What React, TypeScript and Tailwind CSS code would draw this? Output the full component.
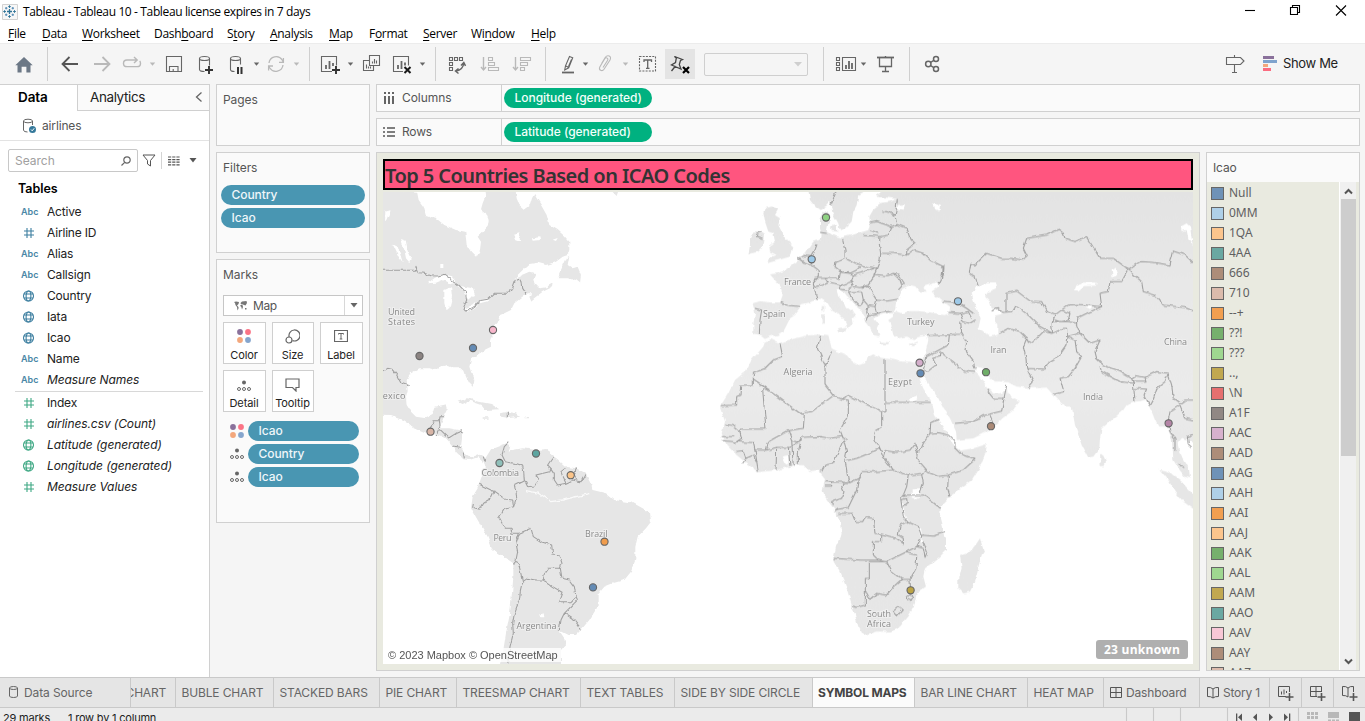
import React from "react";

const UI = "font-['Inter','Noto_Sans',sans-serif]";
const SEG = "font-['Open_Sans','Noto_Sans',sans-serif]";

/* ---------- small drawing helpers ---------- */

function Glyph({ box, className, children }: { box: string; className: string; children?: React.ReactNode }) {
  return (
    <svg viewBox={box} className={"shrink-0 " + className} fill="none" stroke="#666" strokeWidth="1.1">
      {children}
    </svg>
  );
}

function Caret({ x, y = 64, c = "#666" }: { x: number; y?: number; c?: string }) {
  return <path d={`M${x - 2.7},${y - 1.5} h5.4 l-2.7,3.2z`} fill={c} stroke="none" />;
}

function Cross({ x, y }: { x: number; y: number }) {
  return <path d={`M${x - 3},${y - 3} l6,6 m0,-6 l-6,6`} stroke="#1a1a1a" strokeWidth="2" />;
}

function Plus({ x, y }: { x: number; y: number }) {
  return <path d={`M${x - 4},${y} h8 M${x},${y - 4} v8`} stroke="#333" strokeWidth="1.9" />;
}

function FourDots({ className }: { className: string }) {
  return (
    <svg viewBox="0 0 14 14" className={"shrink-0 " + className}>
      <circle cx="3" cy="3" r="2.9" fill="#8a719b" />
      <circle cx="11" cy="3" r="2.9" fill="#fb7486" />
      <circle cx="3" cy="11" r="2.9" fill="#f3a77c" />
      <circle cx="11" cy="11" r="2.9" fill="#85a5cd" />
    </svg>
  );
}

function DetailDots({ className }: { className: string }) {
  return (
    <svg viewBox="0 0 14 12" className={"shrink-0 " + className} fill="none" stroke="#666">
      <circle cx="7" cy="2.4" r="2" fill="#666" stroke="none" />
      <circle cx="2" cy="9" r="1.5" />
      <circle cx="7" cy="9" r="1.5" />
      <circle cx="12" cy="9" r="1.5" />
    </svg>
  );
}

/* ---------- window chrome ---------- */

function TitleBar() {
  return (
    <div className="flex h-[22px] shrink-0 items-center bg-white pl-[2px] pt-px">
      <svg viewBox="0 0 16 16" className="h-4 w-4 shrink-0" fill="none" stroke="#2f7396">
        <path d="M.5,.5 H15.5 V15.5 H.5Z" fill="#f7f7f7" stroke="#d2d2d2" />
        <path d="M7.5,5 v5 M5,7.5 h5" strokeWidth="1.3" />
        <path d="M7.5,1.3 v2.6 M6.2,2.6 h2.6 M7.5,11.2 v2.6 M6.2,12.5 h2.6 M1.3,7.5 h2.6 M2.6,6.2 v2.6 M11.2,7.5 h2.6 M12.5,6.2 v2.6" />
        <path d="M4.2,3 v2.4 M3,4.2 h2.4 M10.8,3 v2.4 M9.6,4.2 h2.4 M4.2,9.6 v2.4 M3,10.8 h2.4 M10.8,9.6 v2.4 M9.6,10.8 h2.4" stroke="#5089b4" />
      </svg>
      <span className={"ml-[5px] whitespace-nowrap text-[12px] tracking-[-0.37px] text-black " + SEG}>
        Tableau - Tableau 10 - Tableau license expires in 7 days
      </span>
      <div className="flex-1" />
      <Glyph box="1240 0 110 22" className="mr-[15px] h-[22px] w-[110px]">
        <path d="M1245,9.5 h10" stroke="#000" />
        <path d="M1290.5,6.5 h7 v7 h-7z M1292.5,6.500 v-2 h7 v7 h-2" stroke="#000" />
        <path d="M1336,4.5 l10,10 m0,-10 l-10,10" stroke="#000" />
      </Glyph>
    </div>
  );
}

const MENU: [string, string, string, string][] = [
  ["", "F", "ile", "w-[34px]"],
  ["", "D", "ata", "w-[40px]"],
  ["", "W", "orksheet", "w-[72px]"],
  ["Dash", "b", "oard", "w-[73px]"],
  ["S", "t", "ory", "w-[43px]"],
  ["", "A", "nalysis", "w-[59px]"],
  ["", "M", "ap", "w-[40px]"],
  ["F", "o", "rmat", "w-[54px]"],
  ["", "S", "erver", "w-[48px]"],
  ["Wi", "n", "dow", "w-[60px]"],
  ["", "H", "elp", "w-[40px]"],
];

function MenuBar() {
  return (
    <div className={"flex h-[21px] shrink-0 items-center bg-white pl-2 text-[12px] tracking-[-0.3px] text-black " + SEG}>
      {MENU.map(([a, u, b, w]) => (
        <span key={a + u + b} className={"shrink-0 whitespace-nowrap pt-[2px] " + w}>
          {a}
          <span className="underline underline-offset-2">{u}</span>
          {b}
        </span>
      ))}
    </div>
  );
}

function ToolSep() {
  return <div className="h-[34px] w-px shrink-0 bg-[#cfcfcf]" />;
}

function Toolbar() {
  const d = "#b9b9b9";
  return (
    <div className="flex h-[41px] shrink-0 items-center border-t border-[#ececec] bg-[#f5f5f5]">
      <Glyph box="0 44 47 40" className="h-10 w-[47px]">
        <path d="M15.3,65.3 L24,57 L32.7,65.3 H30.5 V72.5 H26.4 V66.7 H21.6 V72.5 H17.5 V65.3Z" fill="#6c7886" stroke="none" />
      </Glyph>
      <ToolSep />
      <Glyph box="48 44 261 40" className="h-10 w-[261px]">
        <path d="M62.5,64 H78 M69.5,57 L62.5,64 L69.5,71" stroke="#555" strokeWidth="1.8" />
        <path d="M94,64 H109 M102.5,57 L109.5,64 L102.5,71" stroke={d} strokeWidth="1.8" />
        <path d="M137,60 H127 q-3.5,0 -3.5,3.4 q0,3.2 3.5,3.2 H137 q3.5,0 3.5,-3.2 q0,-1.6 -.8,-2.4 M134,57 l3.2,3 l-3.2,3" stroke={d} strokeWidth="1.4" />
        <Caret x={152.5} c={d} />
        <path d="M166.5,56.5 h15 v15 h-15z M169.5,71.5 V66.5 H178 V71.5 M173.2,69 v2.5" />
        <path d="M199.5,58.5 v11 q0,2 5,2 M209.5,58.5 v7" />
        <ellipse cx="204.5" cy="58.5" rx="5" ry="2" />
        <Plus x={209} y={70} />
        <path d="M230.5,58.5 v11 q0,2 4,2 M240.5,58.5 v6" />
        <ellipse cx="235.5" cy="58.5" rx="5" ry="2" />
        <path d="M238,67 v7 M241.5,67 v7" stroke="#333" strokeWidth="2" />
        <Caret x={256.5} />
        <path d="M269,63 a7.2,7.2 0 0 1 13.2,-3 l1,2 m.2,-4 v4.4 h-4.4 M283,65 a7.2,7.2 0 0 1 -13.2,3 l-1,-2 m-.2,4.5 v-4.5 h4.4" stroke={d} strokeWidth="1.3" />
        <Caret x={296.5} c={d} />
      </Glyph>
      <ToolSep />
      <Glyph box="310 44 125 40" className="h-10 w-[125px]">
        <path d="M332,71.5 h-10.5 v-15 h15 v9" />
        <path d="M326,69 v-4 M329.5,69 v-8 M333,66 v-3" strokeWidth="1.8" />
        <Plus x={336} y={70} />
        <Caret x={350.5} />
        <path d="M369.5,55.5 h10 v10 h-10z M369.5,60.5 h-6 v10 h10 v-5" />
        <path d="M372.5,63.5 v-2 M374.5,63.5 v-4.5 M376.5,63.5 v-3 M366.5,68.5 v-4 M368.5,68.5 v-2 M370.5,68.5 v-2" />
        <path d="M403,71.5 h-9.5 v-15 h15 v9" />
        <path d="M398,69 v-4 M401.5,69 v-8 M405,65.5 v-3" strokeWidth="1.8" />
        <Cross x={407.5} y={70} />
        <Caret x={422.5} />
      </Glyph>
      <ToolSep />
      <Glyph box="436 44 109 40" className="h-10 w-[109px]">
        <path d="M449.5,57.5 h3 v3 h-3z M454.5,57.5 h3 v3 h-3z M459.5,57.5 h3 v3 h-3z M449.5,62.5 h3 v3 h-3z M449.5,67.5 h3 v3 h-3z" />
        <path d="M456,71 q7,-1 7.8,-8 M461,65.5 l2.8,-3 l1.7,3.3 M458.5,68.5 l-3,2.6 l3,2.4" strokeWidth="1.5" />
        <g stroke={d}>
          <path d="M483.5,57 v13 M481,67 l2.5,3 l2.5,-3" strokeWidth="1.4" />
          <path d="M488.5,57.5 h4 v3 h-4z M488.5,62.5 h6 v3 h-6z M488.5,67.5 h10 v3 h-10z" />
          <path d="M515.5,57 v13 M513,67 l2.5,3 l2.5,-3" strokeWidth="1.4" />
          <path d="M520.5,57.5 h10 v3 h-10z M520.5,62.5 h7 v3 h-7z M520.5,67.5 h4 v3 h-4z" />
        </g>
      </Glyph>
      <ToolSep />
      <Glyph box="546 44 119 40" className="h-10 w-[119px]">
        <path d="M569.5,56.5 l3.2,1.3 l-4,10 l-4,2.2 l.8,-4.2z M565.5,65.8 l3.2,1.6 M568.5,66.5 l3,-7" />
        <path d="M562,72.5 h12" strokeWidth="1.8" />
        <Caret x={585.5} />
        <path d="M603,67.5 l4.5,-7 q1,-2 -.6,-2.6 q-1.4,-.6 -2.3,1 l-4.8,8 q-1,2.5 .8,3.4 q2,1 3.4,-1 l6,-9.3 q1.4,-3 -.8,-4 q-2.4,-.8 -4,1.5 l-3.6,6" stroke={d} />
        <Caret x={625.5} c={d} />
        <path d="M639.5,56.5 h16 v14.5 h-16z" strokeDasharray="2 1.2" />
        <path d="M644,62 v-2 h7.5 v2 M647.7,60 v8 M646,68.3 h3.5" strokeWidth="1.3" />
      </Glyph>
      <Glyph box="665 49 30 30" className="h-[30px] w-[30px] bg-[#e4e4e4]">
        <path d="M674.5,56.5 l8,3 l-2,1 l-1.2,4 l1.7,4.5 l-9.5,-4 l4,-2.5 l.8,-4.5z M675.5,66 l-4,5" stroke="#444" strokeWidth="1.3" />
        <path d="M683,67 l6,6 m0,-6 l-6,6" stroke="#000" strokeWidth="2.2" />
      </Glyph>
      <div className="ml-[9px] mr-[15px] flex h-[23px] w-[104px] shrink-0 items-center justify-end rounded-[2px] border border-[#cfcfcf] pr-[5px]">
        <svg viewBox="0 0 8 5" className="h-[5px] w-2"><path d="M0,0 H8 L4,4.5Z" fill="#cfcfcf" /></svg>
      </div>
      <ToolSep />
      <Glyph box="824 44 85 40" className="h-10 w-[85px]">
        <path d="M836.5,57.5 h3 v3 h-3z M836.5,62.5 h3 v3 h-3z M836.5,67.5 h3 v3 h-3z M842.5,57.5 h13 v13 h-13z" />
        <path d="M846,69 v-4 M849,69 v-8 M852,69 v-6" strokeWidth="1.8" />
        <Caret x={863.5} />
        <path d="M877,57.5 h17" strokeWidth="1.8" />
        <path d="M879.5,58 v8.5 h12 v-8.5 M885.5,56 v2 M885.5,66.5 v4.5 M882,71.5 h7" strokeWidth="1.3" />
      </Glyph>
      <ToolSep />
      <Glyph box="910 44 45 40" className="h-10 w-[45px]">
        <circle cx="928.3" cy="64" r="2.7" strokeWidth="1.5" />
        <circle cx="936" cy="59" r="2.5" strokeWidth="1.5" />
        <circle cx="936" cy="69" r="2.5" strokeWidth="1.5" />
        <path d="M930.5,62.5 l3.3,-2.2 M930.5,65.5 l3.3,2.2" strokeWidth="1.5" />
      </Glyph>
      <div className="flex-1" />
      <Glyph box="1220 44 60 40" className="h-10 w-[60px]">
        <path d="M1226.5,57.5 h14 l3.5,3.5 l-3.5,3.5 h-14z M1234.5,55 v2 M1234.5,65 v7 M1232,72.5 h5" />
        <path d="M1263,57.5 h11" stroke="#8a719b" strokeWidth="3" />
        <path d="M1263,61.5 h14" stroke="#7fa3cd" strokeWidth="3" />
        <path d="M1263,65.5 h5" stroke="#f3a77c" strokeWidth="3" />
        <path d="M1263,69.5 h8" stroke="#fb6c80" strokeWidth="3" />
      </Glyph>
      <span className={"ml-[3px] w-[82px] shrink-0 whitespace-nowrap text-[13px] tracking-[-0.35px] text-[#222] " + UI}>Show Me</span>
    </div>
  );
}

/* ---------- data pane ---------- */

type Kind = "abc" | "num" | "geo";

function FieldIcon({ kind, color }: { kind: Kind; color: string }) {
  if (kind === "abc")
    return <span className="w-[26px] shrink-0 pt-px text-[9px] font-semibold text-[#4a87a6]">Abc</span>;
  return (
    <svg viewBox="0 0 26 12" className="h-3 w-[26px] shrink-0" fill="none" stroke={color} strokeWidth="1.1">
      {kind === "num" ? (
        <path d="M6,1 v10 M10,1 v10 M3,4 h10 M3,8 h10" />
      ) : (
        <>
          <circle cx="7.5" cy="6" r="5" />
          <ellipse cx="7.5" cy="6" rx="2.4" ry="5" />
          <path d="M3,4 h9 M3,8 h9" />
        </>
      )}
    </svg>
  );
}

const DIMS: [string, Kind, boolean][] = [
  ["Active", "abc", false],
  ["Airline ID", "num", false],
  ["Alias", "abc", false],
  ["Callsign", "abc", false],
  ["Country", "geo", false],
  ["Iata", "geo", false],
  ["Icao", "geo", false],
  ["Name", "abc", false],
  ["Measure Names", "abc", true],
];
const MEASURES: [string, Kind, boolean][] = [
  ["Index", "num", false],
  ["airlines.csv (Count)", "num", true],
  ["Latitude (generated)", "geo", true],
  ["Longitude (generated)", "geo", true],
  ["Measure Values", "num", true],
];

function FieldRow({ f, color }: { f: [string, Kind, boolean]; color: string }) {
  return (
    <div className="flex h-[21px] items-center pl-[21px]">
      <FieldIcon kind={f[1]} color={color} />
      <span className={"whitespace-nowrap pt-px text-[12px] text-[#222] " + (f[2] ? "italic tracking-[-0.08px]" : "tracking-[-0.18px]")}>{f[0]}</span>
    </div>
  );
}

function DataPane() {
  return (
    <div className={"flex w-[210px] shrink-0 flex-col border-r border-t border-[#d0d0d0] bg-white " + UI}>
      <div className="flex h-[26px] shrink-0">
        <div className="w-[77px] pl-[18px] pt-[2px] text-[13.5px] font-semibold tracking-[-0.1px] text-black">Data</div>
        <div className="flex flex-1 justify-between border-b border-l border-[#d0d0d0] bg-[#fafafa] pl-3 pr-[6px] pt-[2px] text-[13.5px] tracking-[-0.4px] text-[#222]">
          Analytics
          <svg viewBox="0 0 8 10" className="mt-[5px] h-[10px] w-2" fill="none" stroke="#666" strokeWidth="1.3"><path d="M6.5,.5 L1.5,5 L6.5,9.5" /></svg>
        </div>
      </div>
      <div className="flex h-[30px] shrink-0 items-center border-b border-[#e3e3e3] pl-[22px] text-[12px] tracking-[-0.15px] text-[#555]">
        <svg viewBox="0 0 15 16" className="mr-[5px] h-4 w-[15px]" fill="none" stroke="#666">
          <ellipse cx="6" cy="3" rx="4.5" ry="1.8" />
          <path d="M1.5,3 v9 q0,2 4,2 M10.5,3 v4" />
          <circle cx="10.5" cy="11.5" r="3.5" fill="#35799b" stroke="none" />
          <path d="M9,11.5 l1.2,1.3 l2,-2.5" stroke="#fff" />
        </svg>
        airlines
      </div>
      <div className="flex h-[39px] shrink-0 items-center pl-2">
        <div className="flex h-[23px] w-[130px] items-center justify-between rounded-[2px] border border-[#c8c8c8] px-[6px] text-[12px] text-[#a0a0a0]">
          Search
          <svg viewBox="0 0 10 10" className="h-[10px] w-[10px]" fill="none" stroke="#666" strokeWidth="1.2"><circle cx="6" cy="4" r="3.2" /><path d="M3.7,6.3 L.5,9.5" /></svg>
        </div>
        <svg viewBox="0 0 14 13" className="ml-[4px] h-[13px] w-[14px]" fill="none" stroke="#555"><path d="M1,1 H13 L8.5,6.5 V12 L5.5,10 V6.5Z" /></svg>
        <div className="ml-[5px] h-[17px] w-px bg-[#d4d4d4]" />
        <svg viewBox="0 0 12 10" className="ml-[6px] h-[10px] w-3" stroke="#555" strokeWidth="1.2"><path d="M0,1 H12 M0,3.6 H12 M0,6.2 H12 M0,8.8 H12" strokeDasharray="3.2 1" /></svg>
        <svg viewBox="0 0 8 5" className="ml-[9px] h-[5px] w-2"><path d="M.5,0 H7.5 L4,4.5Z" fill="#555" /></svg>
      </div>
      <div className="h-[21px] shrink-0 pl-[18px] text-[12.5px] font-semibold leading-[17px] tracking-[-0.05px] text-black">Tables</div>
      {DIMS.map((f) => (
        <FieldRow key={f[0]} f={f} color="#3d7fa0" />
      ))}
      <div className="ml-[15px] mr-[6px] mt-px h-px shrink-0 bg-[#d8d8d8]" />
      {MEASURES.map((f) => (
        <FieldRow key={f[0]} f={f} color="#3fa884" />
      ))}
    </div>
  );
}

/* ---------- cards ---------- */

function BluePill({ children, className }: { children: string; className: string }) {
  return (
    <div className={"flex h-5 items-center rounded-full bg-[#4996b2] pl-[10.5px] text-[12px] font-medium tracking-[-0.05px] text-[#f0f7fa] " + className}>{children}</div>
  );
}

function MarkButton({ label, className, children }: { label: string; className: string; children: React.ReactNode }) {
  return (
    <div className={"flex h-[42px] flex-col items-center justify-between border border-[#cfcfcf] bg-white pb-px pr-px pt-[6px] text-[11px] leading-[14px] tracking-[-0.1px] text-[#222] " + className}>
      {children}
      <span>{label}</span>
    </div>
  );
}

function Cards() {
  return (
    <div className={"ml-[6px] flex w-[154px] shrink-0 flex-col gap-[6px] text-[12px] tracking-[-0.05px] text-[#555] " + UI}>
      <div className="h-[62px] border border-[#d0d0d0] bg-[#fafafa] pl-[6px] pt-[6px]">Pages</div>
      <div className="h-[101px] border border-[#d0d0d0] bg-[#fafafa] pl-1 pt-[6px]">
        <div className="mb-2 h-[18px] pl-[2px]">Filters</div>
        <BluePill className="mb-[3px] w-[144px]">Country</BluePill>
        <BluePill className="w-[144px]">Icao</BluePill>
      </div>
      <div className="h-[264px] border border-[#d0d0d0] bg-[#fafafa] pl-[6px] pt-[6px]">
        <div className="h-[29px]">Marks</div>
        <div className="flex h-[21px] w-[140px] items-stretch border border-[#c6c6c6] bg-white">
          <div className="flex flex-1 items-center pl-[10px] tracking-[-0.4px]">
            <svg viewBox="0 0 13 10" className="mr-[6px] h-[10px] w-[13px]" fill="#777">
              <path d="M0,1 L2,0.5 L5,1 L4.5,3 L3,4.5 L4.5,6 L4.5,7.5 L3.5,9.5 L3,6 L1.5,4 L1,2Z M6.5,4 L8.5,4 L9,6 L8,8.5 L7.3,6 L6.3,5Z M6.5,2 L8,.5 L12.5,0 L13,2 L11.5,4.5 L10,4 L9,3.5 L7,3.2Z M11,7 L12.5,7 L12.5,8.5 L11,8.5Z" />
            </svg>
            Map
          </div>
          <div className="flex w-[18px] items-center justify-center border-l border-[#d8d8d8]">
            <svg viewBox="0 0 8 5" className="h-[5px] w-2"><path d="M.5,0 H7.5 L4,4.5Z" fill="#666" /></svg>
          </div>
        </div>
        <div className="mt-[6px] flex gap-[6px]">
          <MarkButton label="Color" className="w-[43px]"><FourDots className="h-[14px] w-[14px]" /></MarkButton>
          <MarkButton label="Size" className="w-[42px]">
            <svg viewBox="0 0 15 15" className="h-[15px] w-[15px]" fill="none" stroke="#666" strokeWidth="1.2"><path d="M4.2,8 A5.5,5.5 0 1 1 7.5,11.6" /><circle cx="4" cy="11" r="3" /></svg>
          </MarkButton>
          <MarkButton label="Label" className="w-[43px]">
            <svg viewBox="0 0 14 14" className="h-[14px] w-[14px]" fill="none" stroke="#666"><path d="M.5,1.5 h13 v11 h-13z" strokeWidth="1.2" /><path d="M4.5,5.5 V4.5 h5 v1 M7,4.5 v5.5 M5.7,10 h2.6" /></svg>
          </MarkButton>
        </div>
        <div className="mt-[6px] flex gap-[6px]">
          <MarkButton label="Detail" className="w-[43px]"><DetailDots className="mt-[3px] h-3 w-[14px]" /></MarkButton>
          <MarkButton label="Tooltip" className="w-[42px]">
            <svg viewBox="0 0 15 14" className="mt-px h-[14px] w-[15px]" fill="none" stroke="#666" strokeWidth="1.2"><path d="M1,1 H14 V9.5 H11 V13 L7.5,9.5 H1Z" /></svg>
          </MarkButton>
        </div>
        <div className="mt-[9px] flex flex-col gap-[3px] pl-[7px]">
          <div className="flex items-center gap-1"><FourDots className="h-[14px] w-[14px]" /><BluePill className="w-[111px]">Icao</BluePill></div>
          <div className="flex items-center gap-1"><DetailDots className="h-3 w-[14px]" /><BluePill className="w-[111px]">Country</BluePill></div>
          <div className="flex items-center gap-1"><DetailDots className="h-3 w-[14px]" /><BluePill className="w-[111px]">Icao</BluePill></div>
        </div>
      </div>
    </div>
  );
}

function Shelf({ label, pill, rows }: { label: string; pill: string; rows?: boolean }) {
  return (
    <div className={"flex h-7 shrink-0 border border-[#d0d0d0] bg-[#fafafa] text-[12px] text-[#555] " + UI}>
      <div className="flex w-[125px] items-center border-r border-[#d0d0d0] pl-[6px]">
        <svg viewBox="0 0 12 12" className="mr-[7px] h-3 w-3" stroke="#555" strokeWidth="2">
          {rows ? (
            <path d="M0,2 h2 M4,2 h8 M0,6 h2 M4,6 h8 M0,10 h2 M4,10 h8" strokeWidth="1.5" />
          ) : (
            <path d="M2,0 v2 M2,4 v8 M6,0 v2 M6,4 v8 M10,0 v2 M10,4 v8" strokeWidth="1.8" />
          )}
        </svg>
        <span className={rows ? "tracking-[-0.2px]" : "tracking-[-0.05px]"}>{label}</span>
      </div>
      <div className="ml-[2px] mt-[3px] flex h-5 w-[148px] items-center whitespace-nowrap rounded-full bg-[#00b180] pl-[10.5px] text-[12px] font-medium tracking-[-0.03px] text-[#f2fffa]">{pill}</div>
    </div>
  );
}

/* ---------- map ---------- */

const AMERICAS_LAND = [
  "M15,120 L123,125 L128,150 L143,170 L150,195 L180,205 L205,225 L240,240 L268,245 L272,285 L285,305 L300,320 L312,300 L315,275 L305,260 L318,248 L335,230 L338,210 L330,190 L315,178 L320,160 L328,140 L325,120 L418,120 L422,145 L430,165 L445,178 L462,165 L468,145 L475,132 L482,145 L495,165 L512,195 L520,225 L545,240 L565,258 L580,275 L580,300 L575,315 L560,320 L540,335 L510,345 L485,338 L460,342 L440,360 L412,388 L430,378 L460,365 L478,370 L472,385 L475,400 L490,415 L510,412 L530,400 L528,412 L500,425 L480,440 L465,452 L460,440 L470,430 L455,430 L440,440 L415,460 L405,480 L385,490 L372,495 L365,515 L350,530 L345,545 L350,560 L345,575 L345,590 L325,600 L305,615 L285,630 L280,650 L285,665 L295,690 L292,712 L280,700 L270,680 L265,665 L250,652 L230,652 L215,645 L190,650 L180,660 L160,655 L130,655 L105,670 L92,690 L95,720 L90,740 L92,765 L105,785 L120,800 L150,805 L170,795 L178,770 L212,763 L215,775 L205,795 L200,810 L190,835 L220,835 L258,842 L258,865 L255,890 L265,910 L285,922 L315,912 L328,925 L322,937 L305,922 L280,930 L262,928 L240,905 L228,885 L210,865 L180,855 L150,848 L110,830 L80,810 L45,798 L15,797Z",
  "M545,385 L555,360 L570,325 L580,317 L575,345 L590,355 L605,350 L615,375 L612,400 L600,390 L575,385Z",
  "M245,755 L275,745 L310,755 L345,762 L370,778 L330,780 L318,765 L280,752 L260,762Z",
  "M375,790 L395,785 L420,790 L432,800 L400,804 L375,800Z M320,802 h18 v4 h-18z M446,801 h16 v4 h-16z M704,120 L728,120 L722,138Z",
  "M328,925 L345,898 L370,888 L392,880 L400,890 L395,905 L410,900 L440,895 L480,900 L515,897 L520,910 L545,928 L570,950 L600,955 L630,970 L645,1000 L650,1020 L690,1030 L715,1050 L770,1058 L800,1075 L822,1090 L825,1115 L810,1135 L785,1160 L778,1190 L778,1230 L765,1265 L745,1290 L715,1298 L685,1310 L665,1335 L665,1370 L640,1410 L615,1440 L600,1455 L575,1455 L550,1442 L565,1465 L568,1485 L555,1500 L555,1550 L370,1550 L382,1500 L390,1450 L402,1390 L408,1330 L412,1280 L412,1240 L390,1225 L350,1200 L335,1160 L305,1110 L285,1075 L290,1040 L305,1015 L315,985 L330,955 L322,937Z",
];

const AMERICAS_LAKES =
  "M155,400 L175,385 L200,372 L225,378 L240,395 L220,400 L200,390 L180,398Z M205,420 L225,412 L228,440 L220,475 L208,480 L205,455Z M240,405 L265,410 L290,415 L297,435 L285,440 L280,450 L268,440 L262,420Z M262,478 L300,460 L305,468 L275,485Z M308,452 L335,445 L340,452 L312,460Z M75,270 L90,275 L95,300 L105,320 L100,337 L90,325 L85,300Z M50,283 L65,290 L75,320 L80,337 L68,320Z M28,185 L45,180 L35,200 L27,220Z M190,342 h12 v12 h-12z M412,255 L430,250 L432,272 L418,268Z M468,265 L490,262 L492,270 L470,272Z M530,272 L545,267 L540,276Z M490,1395 L503,1390 L505,1402 L494,1402Z";

const AMERICAS_BORDERS =
  "M15,361 L118,361 L120,352 L126,368 L145,370 L165,377 L190,378 L205,373 L225,388 L245,402 L268,425 L272,450 L262,475 L268,483 L290,473 L308,460 L310,452 L335,448 L355,430 L395,430 L408,420 L418,392 L430,388 L438,395 L440,415 L453,434 M15,668 L35,655 L48,658 L62,675 L75,700 L98,707 " +
  "M163,832 L175,820 L168,812 L190,812 L192,800 L205,800 M190,810 L192,830 L178,858 M192,838 L218,864 L240,850 L258,842 M228,888 L256,892 M262,908 L265,925 M322,920 L328,938 M394,785 v20 " +
  "M397,878 L385,890 L378,915 L388,935 L415,940 L440,948 L443,965 L445,990 L455,1010 L475,1008 L490,990 L480,975 L520,965 L525,955 L515,945 L525,930 L533,920 M525,955 L535,970 L535,990 L545,1005 L570,1000 L560,980 L555,965 L568,955 M570,1000 L590,990 L615,995 L628,972 M600,955 L595,975 L605,990 " +
  "M445,990 L415,1005 L422,1040 L413,1070 L410,1050 L385,1047 L355,1025 L310,1003 M355,1022 L345,1045 L320,1060 L310,1078 L290,1072 L292,1062 M413,1070 L385,1078 L368,1105 L385,1135 L405,1135 L408,1150 L430,1150 " +
  "L465,1135 L472,1160 L495,1175 L527,1185 L530,1212 L550,1215 L558,1240 L553,1255 L515,1255 L505,1270 L502,1290 L480,1290 L455,1285 L440,1295 L430,1250 L420,1230 L425,1205 L420,1180 L430,1150 M420,1230 L412,1240 " +
  "M440,1295 L433,1325 L430,1350 L415,1390 L410,1420 L412,1450 L402,1490 L395,1545 M502,1290 L530,1310 L558,1327 L548,1355 L585,1355 L600,1340 L595,1310 L580,1290 L558,1285 L553,1255 M600,1340 L605,1350 L565,1390 L555,1410 L550,1442 M565,1390 L595,1410 L610,1430 L612,1442";

const OLD_WORLD_LAND = [
  "M295,15 L300,45 L315,65 L330,75 L350,62 L360,50 L368,85 L385,115 L390,135 L405,130 L425,110 L430,80 L440,60 L445,30 L470,15Z",
  "M330,105 L340,85 L352,75 L362,95 L355,115 L350,140 L365,150 L395,158 L425,150 L460,140 L475,135 L480,115 L478,95 L492,70 L510,55 L540,50 L562,42 L530,38 L495,35 L520,15 L1460,15 L1460,775 L1440,770 L1415,760 L1403,775 L1408,800 L1425,830 L1437,850 L1440,880 L1425,875 L1405,850 L1390,825 L1388,790 L1385,760 L1370,725 L1345,725 L1335,705 L1325,680 L1315,660 L1305,645 L1280,650 L1250,660 L1240,675 L1200,710 L1175,730 L1170,760 L1168,790 L1150,815 L1135,818 L1115,780 L1095,720 L1085,665 L1065,665 L1045,645 L1030,630 L1010,608 L960,610 L920,605 L895,592 L870,590 L855,590 L835,570 L820,550 L800,545 L795,560 L805,570 L820,590 L828,605 L835,612 L850,625 L870,625 L885,615 L890,600 L893,625 L910,640 L930,648 L905,680 L880,698 L840,735 L790,760 L740,765 L738,740 L720,700 L700,670 L685,640 L660,605 L640,572 L636,560 L628,575 L615,545 L625,530 L640,520 L648,495 L655,465 L650,452 L630,455 L610,462 L590,455 L565,460 L550,450 L545,430 L535,405 L550,395 L545,385 L520,388 L500,395 L490,400 L505,420 L500,430 L510,455 L490,450 L480,430 L465,410 L455,380 L435,360 L410,335 L395,315 L380,315 L385,335 L400,350 L415,370 L435,385 L440,395 L425,395 L428,415 L415,430 L410,415 L400,400 L385,385 L365,375 L350,350 L335,340 L315,345 L300,352 L275,358 L270,370 L255,390 L240,400 L230,420 L220,440 L205,450 L185,453 L165,462 L150,450 L130,445 L130,420 L135,385 L128,355 L150,348 L180,352 L210,352 L218,330 L212,305 L180,268 L200,265 L220,258 L240,245 L265,225 L285,205 L300,185 L310,170 L330,165 L335,150 L330,130Z",
  "M165,70 L185,65 L205,72 L195,90 L210,100 L205,120 L215,140 L230,165 L250,185 L245,205 L240,215 L205,225 L170,235 L185,215 L200,210 L180,200 L178,185 L195,170 L190,145 L175,140 L165,110 L160,85Z",
  "M120,160 L130,140 L150,138 L165,150 L160,185 L145,200 L115,208 L120,180Z",
  "M335,360 h8 v20 h-8Z M333,388 h12 v28 h-10z M380,430 L412,425 L405,442 L385,442Z M508,470 L540,472 L538,478 L510,478Z M595,478 L625,470 L615,485Z M362,125 L380,120 L382,140 L366,138Z",
  "M165,470 L180,462 L205,475 L235,465 L290,452 L335,448 L355,450 L360,470 L365,490 L385,500 L410,510 L425,528 L445,540 L465,535 L470,518 L490,508 L510,518 L540,522 L575,530 L600,530 L620,535 L620,560 L640,610 L665,650 L675,690 L695,720 L710,745 L725,775 L735,785 L750,797 L790,790 L830,777 L828,800 L810,845 L785,885 L750,910 L720,935 L700,955 L692,970 L690,1000 L700,1040 L708,1060 L708,1095 L690,1115 L645,1150 L640,1175 L648,1205 L620,1225 L612,1265 L595,1295 L570,1325 L545,1340 L500,1340 L460,1350 L445,1325 L435,1290 L425,1260 L410,1210 L390,1160 L370,1125 L378,1085 L395,1050 L390,1010 L370,970 L345,935 L338,915 L345,880 L325,855 L300,858 L280,840 L250,842 L200,855 L145,862 L110,835 L80,810 L50,780 L35,745 L45,710 L30,665 L55,625 L75,585 L105,560 L125,525 L160,485Z",
  "M810,1060 L822,1100 L815,1110 L805,1150 L795,1190 L780,1220 L760,1225 L745,1210 L745,1175 L755,1150 L750,1110 L780,1100 L800,1075Z",
  "M1170,805 L1180,812 L1188,830 L1182,843 L1172,843Z",
  "M1348,852 L1375,860 L1410,885 L1460,940 L1460,980 L1420,950 L1395,920 L1375,885Z",
];

const OLD_WORLD_LAKES =
  "M580,310 L600,300 L620,305 L630,320 L650,320 L640,305 L655,300 L680,292 L685,305 L665,320 L680,335 L700,350 L720,365 L718,385 L700,390 L660,382 L625,378 L600,378 L575,385 L560,380 L548,392 L545,388 L558,375 L562,345Z M785,325 L800,305 L830,292 L855,292 L858,310 L835,320 L825,335 L840,350 L845,370 L870,375 L875,390 L855,395 L855,410 L865,420 L865,448 L840,455 L815,435 L805,430 L812,400 L800,370 L790,345Z M605,915 L632,912 L635,930 L620,942 L605,938Z M1092,318 L1100,300 L1115,293 L1160,293 L1158,302 L1125,303 L1105,320Z M1125,364 L1150,362 L1140,372Z M1205,255 L1215,248 L1222,270 L1208,278Z M1412,125 L1430,115 L1440,125 L1448,180 L1435,160 L1430,135 L1415,138Z M562,60 L585,58 L580,75 L565,75Z M670,52 L690,60 L688,80 L675,72Z M600,640 L620,628 L622,640 L605,655Z M215,815 L235,810 L235,842 L225,835Z";

const OLD_WORLD_BORDERS =
  "M380,15 L365,55 L362,60 M330,142 L350,145 M398,165 L405,195 L405,220 L378,232 L375,245 L395,262 L420,265 L440,255 L455,240 L430,232 L410,222 M455,240 L475,245 L500,250 L510,225 L512,205 L508,180 L510,155 L500,153 L460,152 M478,115 L500,110 L545,125 L535,150 L510,155 M480,135 L508,145 M517,78 L540,82 L555,90 L560,118 L545,125 M562,42 L558,75 L555,90 M560,118 L590,130 L600,160 L615,175 L590,195 L590,210 L550,205 L512,205 M590,210 L610,195 L640,205 L660,225 L700,245 L695,280 L685,300 M500,250 L492,268 L530,272 L550,265 L570,285 L575,300 M550,265 L565,268 L583,295 L565,315 " +
  "M318,178 L310,200 L300,215 M262,220 L285,212 L300,215 L305,235 M262,217 L285,235 L305,240 L325,255 L325,275 L310,295 M212,352 L230,360 L270,365 M135,370 L155,375 L150,405 L148,445 M310,295 L315,280 L345,280 L355,290 L335,300 L320,305 L310,295 L318,330 L322,345 M345,280 L385,280 L388,262 L415,260 L430,270 L425,290 L395,300 L360,292 M430,270 L460,262 L492,250 M425,290 L430,305 L450,308 L475,300 L492,275 L492,268 M395,300 L390,312 L410,315 L425,305 M415,320 L455,320 L460,345 L450,365 L430,345 L415,320 M455,310 L475,305 L490,330 L500,345 L495,365 L475,362 L460,345 M500,345 L530,348 L565,342 M468,410 L475,390 L500,385 L545,378 M475,362 L470,380 L475,390 M495,365 L500,385 M155,140 L140,145 L140,155 L158,160 " +
  "M210,475 L218,515 L190,525 L165,550 L130,565 L130,600 L92,600 L90,630 L80,635 L80,660 L32,662 M130,582 L270,685 L305,680 L370,632 L345,600 L345,540 L322,490 L332,450 M365,500 L355,520 L347,545 M178,613 L158,613 L168,732 L95,732 L90,740 L70,722 L45,718 M130,582 L175,613 M270,685 L283,690 L280,730 L235,737 L175,770 L170,795 L200,787 L240,787 L265,773 L245,765 L235,737 M370,632 L395,642 L415,632 L515,680 M395,642 L415,645 L415,690 L390,735 L400,760 M525,522 L525,652 L665,652 M525,652 L525,680 L515,682 L515,725 L497,735 L492,765 L510,790 " +
  "M265,773 L275,757 L330,755 L360,760 L395,755 L410,765 M275,757 L265,800 L265,840 M245,765 L250,845 M235,787 L240,843 M200,787 L198,855 M135,795 L145,860 M35,755 L70,755 M35,767 L70,770 L130,773 L135,795 L170,795 M78,800 L100,797 L108,820 L98,835 M108,820 L130,810 L138,830 M90,740 L95,760 L75,773 M335,860 L345,840 L370,835 L400,765 L410,800 L405,825 L415,885 L420,893 L345,890 M345,903 L365,903 L365,890 M410,827 L440,820 L490,800 L510,790 L520,815 L550,855 L500,860 L455,860 L445,880 L420,893 " +
  "M520,815 L525,797 L560,802 L600,795 L615,775 L622,800 L630,800 M622,800 L620,820 L650,855 L635,865 L595,870 L550,855 M630,800 L640,775 L660,745 L685,743 L715,750 L735,770 L735,790 L750,805 L795,823 L760,855 L715,870 L685,875 L650,860 M660,745 L662,715 L685,703 M715,870 L713,910 L720,935 M635,865 L640,895 L630,925 M580,930 L640,930 L692,970 M595,870 L590,905 L580,930 L572,940 L580,995 L592,1010 L570,1020 L565,1050 L580,1060 L580,1075 L560,1060 L515,1047 L495,1045 L490,1000 L465,997 L458,1010 L438,1010 L428,985 L385,985 M572,945 L590,940 L592,955 L578,965 " +
  "M445,880 L440,915 L415,967 L380,973 L372,980 M400,893 L395,905 L402,920 L395,940 L368,950 L370,960 M515,1047 L515,1070 L490,1070 L490,1110 L505,1125 L450,1125 L370,1120 M478,1130 L530,1130 L585,1103 L620,1085 L635,1055 L625,1025 L592,1010 M505,1125 L530,1130 M585,1103 L620,1110 L618,1150 L600,1183 L575,1183 L545,1160 L530,1130 M635,1050 L670,1053 L708,1040 M620,1085 L640,1090 L645,1117 L652,1100 L640,1070 M478,1130 L478,1180 L466,1180 L466,1260 L440,1267 L425,1263 M468,1220 L480,1243 L500,1225 L530,1230 L550,1205 L575,1183 M600,1183 L602,1210 L610,1225 M592,1235 L600,1230 L608,1238 L602,1248 L592,1242Z M550,1278 L565,1265 L577,1275 L562,1292Z " +
  "M650,452 L700,450 L750,447 L755,445 M752,410 L755,445 L770,470 L765,495 L790,530 L795,550 M718,450 L715,480 L650,515 L640,555 M690,500 L730,530 L760,558 L795,562 M690,500 L688,515 L668,520 L678,540 L655,558 L640,555 M700,348 L740,352 L770,370 L790,385 M715,382 L750,385 L760,410 L780,415 L795,405 M750,385 L775,380 L785,400 M735,715 L790,710 L820,692 L875,678 L882,640 L850,640 L830,615 M840,690 L850,715 M882,640 L890,600 " +
  "M805,300 L795,275 L778,265 L782,235 L795,240 L830,205 L875,220 L905,220 L935,225 L952,215 L940,190 L950,160 L1010,150 L1045,133 L1060,145 L1065,160 L1095,170 L1130,155 L1170,220 L1210,220 L1245,245 L1255,253 L1235,290 L1200,290 L1195,320 L1170,325 L1175,365 L1105,358 L1075,360 L1035,390 L1010,380 L995,350 L960,348 L920,318 L888,325 L888,382 M845,378 L865,368 L880,382 L905,380 L915,362 L935,375 L960,395 L990,425 L1028,445 L1025,420 L1035,390 M868,445 L895,430 L930,440 L950,460 L955,475 L975,465 L1000,440 L1028,445 L1060,430 L1070,430 L1070,455 L1110,445 " +
  "M950,460 L940,485 L948,520 L950,550 L970,590 L955,608 M950,550 L1005,552 L1015,535 L1040,520 L1068,480 L1070,455 L1095,465 L1100,500 L1115,515 L1095,550 L1075,575 L1050,580 L1062,620 L1032,628 M1035,390 L1055,375 L1080,385 L1075,405 L1050,410 L1035,405 M1175,365 L1130,385 L1100,400 L1100,420 L1110,445 M1025,410 L1075,410 L1100,415 M1255,253 L1290,230 L1330,232 L1380,240 L1390,198 L1425,210 L1455,238 M1255,253 L1295,290 L1300,320 L1335,330 L1360,360 L1425,368 L1455,380 " +
  "M1110,445 L1140,475 L1170,465 L1155,500 L1160,520 L1180,540 L1230,560 L1265,580 L1270,595 L1230,590 L1175,560 L1170,545 M1265,580 L1275,572 L1305,577 L1308,588 L1270,588 M1305,577 L1340,560 L1375,565 L1365,590 L1340,610 L1330,640 L1318,662 M1270,595 L1275,650 M1270,610 L1310,612 L1302,630 L1318,662 M1375,568 L1385,600 L1390,640 L1410,655 L1425,645 L1455,645 M1410,660 L1380,680 L1375,705 L1380,740 L1395,760 L1395,800 M1410,660 L1425,700 L1455,705 M1455,745 L1432,755 L1435,780 L1445,790 M1405,835 L1420,845 M690,250 L702,243 L700,270 L692,278";

const MAP_LABELS: [number, number, string, number][] = [
  [388, 314.5, "United", 27],
  [388, 325, "States", 27],
  [374.5, 399, "Mexico", 31],
  [481.5, 476, "Colombia", 37.5],
  [493.5, 541, "Peru", 18],
  [585, 537, "Brazil", 22.5],
  [516.5, 628.5, "Argentina", 40],
  [784, 284.5, "France", 27],
  [763, 317, "Spain", 22.5],
  [783.5, 374.5, "Algeria", 29],
  [888, 385, "Egypt", 24],
  [907, 325, "Turkey", 27.5],
  [990.5, 352.5, "Iran", 16],
  [1083, 400, "India", 20],
  [1164, 344.5, "China", 23],
  [867, 616.5, "South", 24],
  [867, 627, "Africa", 24],
];

const POINTS: [number, number, string][] = [
  [493, 330, "#f7b6cb"],
  [473, 348, "#648bb5"],
  [419.5, 356, "#8c8482"],
  [430.5, 431.7, "#d8b5a6"],
  [499.5, 463, "#8fc0ba"],
  [536, 453.5, "#5da5a0"],
  [570.7, 475.2, "#fbc489"],
  [604.5, 541.7, "#f09c4c"],
  [593, 587.4, "#648bb5"],
  [826, 217.5, "#8fd283"],
  [811.7, 259.3, "#9dc9e8"],
  [958, 301.3, "#9dc9e8"],
  [919.6, 362.7, "#d4aecb"],
  [920.5, 373.3, "#648bb5"],
  [986, 372.2, "#6fae68"],
  [991, 426.2, "#ab8a77"],
  [1168.6, 423.3, "#b484a6"],
  [910.6, 590.3, "#bba345"],
];

function WorldMap() {
  return (
    <svg viewBox="383 192 810 472" className="block h-[472px] w-[810px] bg-white">
      <defs>
        <filter id="coast" filterUnits="userSpaceOnUse" x="370" y="180" width="840" height="500" colorInterpolationFilters="sRGB">
          <feTurbulence type="fractalNoise" baseFrequency="0.16" numOctaves="2" seed="4" result="n" />
          <feDisplacementMap in="SourceGraphic" in2="n" scale="4" xChannelSelector="R" yChannelSelector="G" />
        </filter>
        <linearGradient id="land" gradientUnits="userSpaceOnUse" x1="0" y1="0" x2="0" y2="1440">
          <stop offset="0" stopColor="#e3e3e3" />
          <stop offset=".2" stopColor="#e8e8e8" />
          <stop offset=".42" stopColor="#ebebeb" />
          <stop offset=".62" stopColor="#e6e6e6" />
          <stop offset="1" stopColor="#e7e7e7" />
        </linearGradient>
      </defs>
      <g filter="url(#coast)">
        <g transform="translate(376 150) scale(.33333)">
          <path d={AMERICAS_LAND.join(" ")} fill="#e6e6e6" />
          <path d={AMERICAS_LAKES} fill="#fff" />
          <path d="M450,1022 L490,1030 L525,1055 L560,1050 L600,1040 L645,1030" fill="none" stroke="#fafafa" strokeWidth="4" />
          <path d={AMERICAS_BORDERS} fill="none" stroke="#a0a0a0" strokeWidth="3.2" strokeLinejoin="round" />
        </g>
        <g transform="translate(710 185) scale(.33333)">
          {OLD_WORLD_LAND.map((d) => (
            <path key={d.slice(0, 14)} d={d} fill="url(#land)" />
          ))}
          <path d={OLD_WORLD_LAKES} fill="#fff" />
          <path d="M577,955 L580,990 L592,1010 M630,1030 L636,1075" fill="none" stroke="#fff" strokeWidth="6" />
          <path d={OLD_WORLD_BORDERS} fill="none" stroke="#a0a0a0" strokeWidth="3.2" strokeLinejoin="round" />
        </g>
      </g>
      <g className={SEG} fontSize="9" fill="#8a8a8a" stroke="#efefef" strokeWidth="2" paintOrder="stroke">
        {MAP_LABELS.map(([x, y, t, w]) => (
          <text key={t} x={x} y={y} textLength={w}>{t}</text>
        ))}
      </g>
      {POINTS.map(([x, y, c]) => (
        <circle key={x} cx={x} cy={y} r="3.6" fill={c} stroke="#666" strokeWidth="1.1" />
      ))}
    </svg>
  );
}

function Viz() {
  return (
    <div className="flex w-[824px] shrink-0 flex-col border border-[#d0d0d0] bg-[#e9eae0] px-[6px] pt-[6px]">
      <div className="flex h-[31px] shrink-0 items-center border-2 border-black bg-[#ff557f]">
        <span className="whitespace-nowrap pt-[2px] font-['Noto_Sans',sans-serif] text-[20px] font-semibold leading-none tracking-[-0.56px] text-[#333]">
          Top 5 Countries Based on ICAO Codes
        </span>
      </div>
      <div className="relative mt-[2px] h-[472px] w-[810px] shrink-0">
        <WorldMap />
        <div className="absolute bottom-[2px] left-[2px] flex h-[14px] items-center whitespace-nowrap bg-white/80 px-[3px] font-['Liberation_Sans',sans-serif] text-[11px] text-[#555]">
          © 2023 Mapbox © OpenStreetMap
        </div>
        <div className={"absolute bottom-[5px] right-[5px] flex h-[19px] w-[92px] items-center justify-center rounded-[3px] bg-[#afafaf] text-[12px] font-bold tracking-[0.25px] text-white " + SEG}>
          23 unknown
        </div>
      </div>
    </div>
  );
}

/* ---------- legend ---------- */

const LEGEND: [string, string][] = [
  ["Null", "bg-[#6f92b7]"],
  ["0MM", "bg-[#afd0e8]"],
  ["1QA", "bg-[#fcc58d]"],
  ["4AA", "bg-[#6aa8a2]"],
  ["666", "bg-[#ad8d79]"],
  ["710", "bg-[#dbbbac]"],
  ["--+", "bg-[#f29f50]"],
  ["??!", "bg-[#76b06d]"],
  ["???", "bg-[#9fd790]"],
  ["..,", "bg-[#c1a850]"],
  ["\\N", "bg-[#e6706f]"],
  ["A1F", "bg-[#918884]"],
  ["AAC", "bg-[#d7b1cd]"],
  ["AAD", "bg-[#ad8d79]"],
  ["AAG", "bg-[#6f92b7]"],
  ["AAH", "bg-[#afd0e8]"],
  ["AAI", "bg-[#f29f50]"],
  ["AAJ", "bg-[#fcc58d]"],
  ["AAK", "bg-[#76b06d]"],
  ["AAL", "bg-[#9fd790]"],
  ["AAM", "bg-[#c1a850]"],
  ["AAO", "bg-[#6aa8a2]"],
  ["AAV", "bg-[#f8c7d6]"],
  ["AAY", "bg-[#ad8d79]"],
  ["AAZ", "bg-[#dbbbac]"],
];

function Legend() {
  return (
    <div className={"ml-[6px] flex w-[154px] shrink-0 flex-col border border-[#d0d0d0] bg-[#fafafa] text-[12px] text-[#555] " + UI}>
      <div className="h-[29px] shrink-0 pl-[6px] pt-[6px] tracking-[-0.15px]">Icao</div>
      <div className="flex min-h-0 flex-1 bg-[#e9eae0]">
        <div className="min-w-0 flex-1 overflow-hidden pl-1 pt-px">
          {LEGEND.map(([t, c]) => (
            <div key={t} className="flex h-5 items-center gap-[5px]">
              <div className={"h-[13px] w-[13px] shrink-0 border border-[#666] " + c} />
              <span className="font-['Noto_Sans',sans-serif] text-[12px] tracking-[-0.05px] text-[#606060]">{t}</span>
            </div>
          ))}
        </div>
        <div className="mr-[3px] flex w-[17px] flex-col items-center border-l border-white bg-[#f0f0f0] pb-px pt-px">
          <svg viewBox="0 0 15 16" className="h-4 w-[15px]" fill="none" stroke="#555" strokeWidth="2"><path d="M4,10.5 L7.5,7 L11,10.5" /></svg>
          <div className="h-[257px] w-[15px] bg-[#cdcdcd]" />
          <div className="flex-1" />
          <svg viewBox="0 0 15 16" className="h-4 w-[15px]" fill="none" stroke="#555" strokeWidth="2"><path d="M4,6.5 L7.5,10 L11,6.5" /></svg>
        </div>
      </div>
    </div>
  );
}

/* ---------- bottom bars ---------- */

const TABS: [string, string][] = [
  ["BUBLE CHART", "w-[98px]"],
  ["STACKED BARS", "w-[106px]"],
  ["PIE CHART", "w-[77px]"],
  ["TREESMAP CHART", "w-[124px]"],
  ["TEXT TABLES", "w-[94px]"],
  ["SIDE BY SIDE CIRCLE", "w-[138px]"],
  ["SYMBOL MAPS", "w-[102px]"],
  ["BAR LINE CHART", "w-[113px]"],
  ["HEAT MAP", "w-[76px]"],
];

function GridGlyph() {
  return <path d="M.5,1.5 h11 v10 h-11z M6,1.5 v10 M.5,6.5 h11" />;
}

function BookGlyph() {
  return <path d="M6,3 Q4,1 .5,1.5 V10.5 Q4,10.2 6,12 Q8,10.2 11.5,10.5 V1.5 Q8,1 6,3 V12" />;
}

function SheetTabs() {
  const cell = "flex h-full shrink-0 items-center whitespace-nowrap border-r border-[#c9c9c9] ";
  return (
    <div className={"flex h-[31px] shrink-0 items-center overflow-hidden border-b border-t border-[#c9c9c9] bg-[#e5e5e5] text-[12px] text-[#666] " + UI}>
      <div className={cell + "w-[131px] pl-[9px] tracking-[-0.12px]"}>
        <svg viewBox="0 0 9 12" className="mb-[2px] mr-[6px] h-3 w-[9px]" fill="none" stroke="#666"><path d="M.5,2 v8 q0,1.5 4,1.5 q4,0 4,-1.5 v-8" /><ellipse cx="4.5" cy="2" rx="4" ry="1.5" /></svg>
        Data Source
      </div>
      <div className={cell + "w-[45px] justify-end overflow-hidden pr-[9px] tracking-[-0.2px]"}>CHART</div>
      {TABS.map(([t, w]) => (
        <div key={t} className={cell + w + (t === "SYMBOL MAPS" ? " bg-[#fbfbfb] pl-[5px] font-bold tracking-[-0.17px] text-[#444]" : " pl-[5.5px] tracking-[-0.14px]")}>
          {t}
        </div>
      ))}
      <div className={cell + "w-[96px] pl-[6px] tracking-[-0.15px]"}>
        <svg viewBox="0 0 12 13" className="mr-[4px] h-[13px] w-3" fill="none" stroke="#555"><GridGlyph /></svg>
        Dashboard
      </div>
      <div className={cell + "w-[70px] pl-[7px] tracking-[-0.2px]"}>
        <svg viewBox="0 0 12 13" className="mr-[4px] h-[13px] w-3" fill="none" stroke="#555"><BookGlyph /></svg>
        Story 1
      </div>
      <div className={cell + "w-8 justify-center"}>
        <svg viewBox="0 0 16 16" className="h-4 w-4" fill="none" stroke="#555"><path d="M8,11.5 H.5 V1.500 H11.5 V7 M3.5,9.5 v-3 M6,9.5 v-5 M8.5,8 v-2" /><path d="M7.5,12 h8 M11.5,8 v8" strokeWidth="1.6" /></svg>
      </div>
      <div className={cell + "w-8 justify-center"}>
        <svg viewBox="0 0 16 16" className="h-4 w-4" fill="none" stroke="#555"><path d="M7,11.5 H.5 V1.5 H11.5 V7 M6,1.5 v10 M.5,6.5 h11" /><path d="M7.5,12 h8 M11.5,8 v8" strokeWidth="1.6" /></svg>
      </div>
      <div className="flex w-8 items-center justify-center">
        <svg viewBox="0 0 16 16" className="h-4 w-4" fill="none" stroke="#555"><path d="M6,12 Q4,10.2 .5,10.5 V1.5 Q4,1 6,3 V12 M6,3 Q8,1 11.5,1.5 V7" /><path d="M7.5,12 h8 M11.5,8 v8" strokeWidth="1.6" /></svg>
      </div>
    </div>
  );
}

function StatusBar() {
  return (
    <div className={"flex h-[13px] shrink-0 overflow-hidden bg-[#ebebeb] text-[11px] leading-[20px] tracking-[-0.2px] text-[#222] " + UI}>
      <span className="w-[65px] shrink-0 whitespace-nowrap pl-[3px]">29 marks</span>
      <span className="whitespace-nowrap pl-[3px]">1 row by 1 column</span>
      <div className="flex-1" />
      <Glyph box="1120 708 245 13" className="h-[13px] w-[245px]">
        <path d="M1126.5,708 v13 M1153.5,708 v13 M1180.5,708 v13 M1227.5,708 v13 M1298.5,708 v13" stroke="#c9c9c9" />
        <g fill="#555" stroke="none">
          <path d="M1236,713.5 h1.3 v7.5 h-1.3z M1242,713.5 v7.5 l-4,-3.7z M1257,713.5 v7.5 l-4,-3.7z M1269,713.5 v7.5 l4,-3.7z M1284,713.5 v7.5 l4,-3.7z M1289,713.5 h1.3 v7.5 h-1.3z" />
          <path d="M1307,712 h3v3h-3z M1311,712 h3v3h-3z M1315,712 h3v3h-3z M1307,716 h3v3h-3z M1311,716 h3v3h-3z M1315,716 h3v3h-3z M1328,712 h11 v6 h-11z M1328,719.5 h3v1.5h-3z M1332,719.5 h3v1.5h-3z M1336,719.5 h3v1.5h-3z" fill="#b8b8b8" />
          <path d="M1349,712 h11 v9 h-11z" />
        </g>
      </Glyph>
    </div>
  );
}

export default function App() {
  return (
    <div className="flex h-[721px] w-[1365px] flex-col overflow-hidden bg-[#f5f5f5]">
      <TitleBar />
      <MenuBar />
      <Toolbar />
      <div className="flex h-[593px] shrink-0">
        <DataPane />
        <Cards />
        <div className="ml-[6px] flex w-[984px] shrink-0 flex-col gap-[6px]">
          <Shelf label="Columns" pill="Longitude (generated)" />
          <Shelf label="Rows" pill="Latitude (generated)" rows />
          <div className="flex h-[519px] shrink-0">
            <Viz />
            <Legend />
          </div>
        </div>
      </div>
      <SheetTabs />
      <StatusBar />
    </div>
  );
}
